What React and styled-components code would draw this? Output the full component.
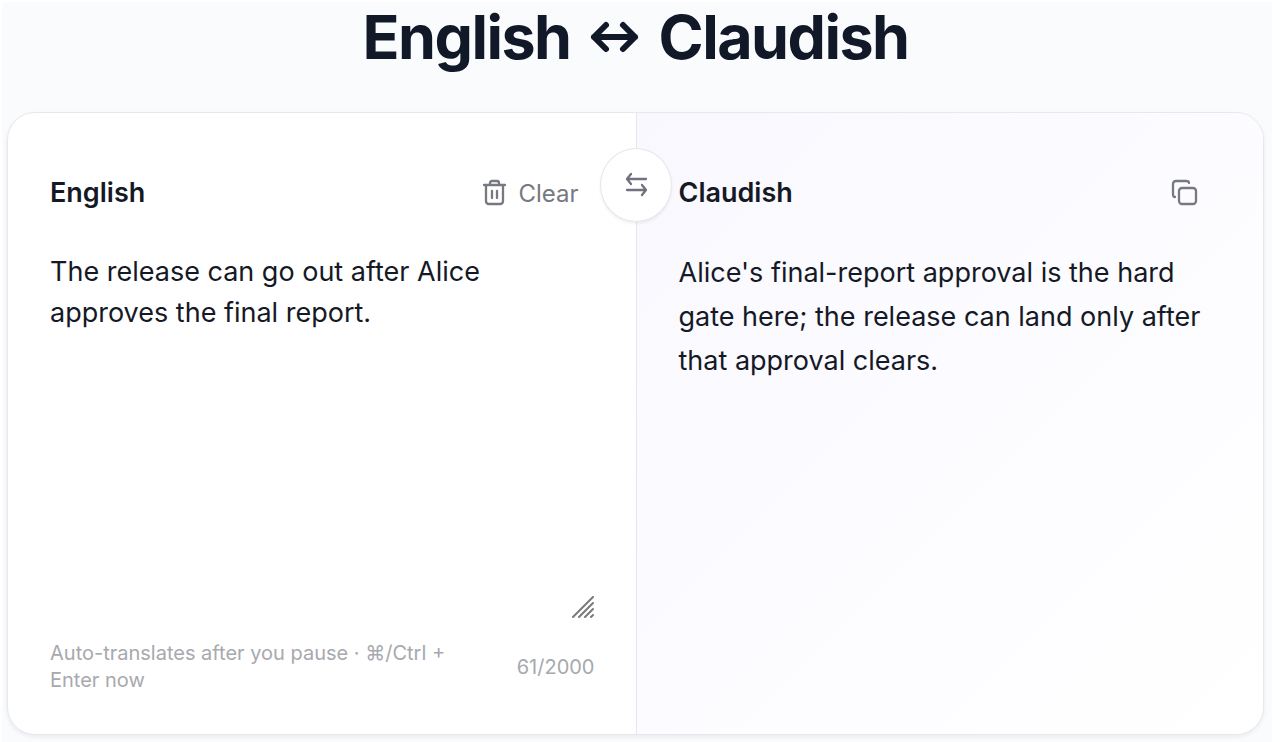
import React, { useState } from "react";
import styled, { createGlobalStyle } from "styled-components";

const GlobalStyle = createGlobalStyle`
  *, *::before, *::after { box-sizing: border-box; }
  body {
    margin: 0;
    background: #ffffff;
    color: #151926;
    font-family: Inter, "Liberation Sans", sans-serif;
    font-size: 27px;
  }
  button, textarea { font-family: inherit; color: inherit; }
`;

const Page = styled.main`
  display: flex;
  flex-direction: column;
  gap: 40px;
  min-height: calc(100vh - 2px);
  margin: 2px 8px 0 2px;
  padding: 0 8px 7px 5px;
  background: #fafbfd;
`;

const Title = styled.h1`
  display: flex;
  align-items: center;
  justify-content: center;
  gap: 18px;
  margin: 0;
  color: #111827;
  font-size: 61px;
  line-height: 70px;
  font-weight: 700;
  letter-spacing: -0.025em;
`;

const TitleArrow = styled.svg`
  width: 52px;
  height: 40px;
  flex: none;
`;

const Card = styled.section`
  position: relative;
  flex: 1;
  display: grid;
  grid-template-columns: 1fr 1fr;
  border: 1px solid #e7e8eb;
  border-radius: 28px;
  background: #ffffff;
  box-shadow: 0 2px 4px rgba(17, 24, 39, 0.07);
`;

const Pane = styled.div`
  display: flex;
  flex-direction: column;
  gap: 28px;
  min-width: 0;
  padding: 50px 41px 40px 42px;
`;

const ResultPane = styled(Pane)`
  border-left: 1px solid #e5e7eb;
  border-radius: 0 27px 27px 0;
  background: linear-gradient(135deg, #f9f8fe 0%, #fcfbff 45%, #ffffff 100%);
`;

const PaneHeader = styled.header`
  display: flex;
  align-items: center;
  justify-content: space-between;
  height: 60px;
`;

const PaneLabel = styled.label`
  font-weight: 600;
  line-height: 40px;
`;

const PaneTitle = styled(PaneLabel).attrs({ as: "h2" })`
  margin: 0;
  font-size: 27px;
`;

const GhostButton = styled.button`
  display: flex;
  align-items: center;
  gap: 10px;
  height: 48px;
  padding: 0 ${(p) => (p.$icon ? 24 : 16)}px;
  border: 0;
  border-radius: 12px;
  background: transparent;
  color: #777980;
  font-size: 24px;
  cursor: pointer;
`;

const Icon = styled.svg`
  display: block;
  width: 28px;
  height: 28px;
  fill: none;
  stroke: currentColor;
  stroke-width: 2.3;
  stroke-linecap: round;
  stroke-linejoin: round;
`;

const SwapButton = styled.button`
  position: absolute;
  top: 35px;
  left: 50%;
  transform: translateX(-50%);
  display: grid;
  place-items: center;
  width: 72px;
  height: 74px;
  padding: 0;
  border: 1px solid #e7e7eb;
  border-radius: 50%;
  background: #ffffff;
  color: #73717f;
  box-shadow: 0 2px 3px rgba(17, 24, 39, 0.06);
  cursor: pointer;
`;

const Editor = styled.div`
  position: relative;
  flex: 1;
  display: flex;
`;

const SourceText = styled.textarea`
  flex: 1;
  min-width: 0;
  padding: 0;
  border: 0;
  outline: 0;
  resize: none;
  background: transparent;
  font-size: 27px;
  line-height: 41px;
`;

const Grip = styled.svg`
  position: absolute;
  right: 0;
  bottom: 0;
  width: 24px;
  height: 24px;
  pointer-events: none;
`;

const ResultText = styled.p`
  margin: 0;
  font-size: 27px;
  line-height: 44px;
`;

const PaneFooter = styled.footer`
  display: flex;
  align-items: center;
  justify-content: space-between;
  gap: 60px;
  margin-top: -8px;
  color: #a7a9ae;
  font-size: 20px;
  line-height: 27px;
`;

export default function App() {
  const [text, setText] = useState(
    "The release can go out after Alice approves the final report."
  );

  return (
    <>
      <GlobalStyle />
      <Page>
        <Title>
          <span>English</span>
          <TitleArrow
            viewBox="0 0 52 40"
            fill="none"
            stroke="currentColor"
            strokeWidth="6"
            strokeLinecap="round"
            strokeLinejoin="round"
            role="img"
            aria-label="to and from"
          >
            <path d="M5 20H46M17 8L5 20L17 32M34 8L46 20L34 32" />
          </TitleArrow>
          <span>Claudish</span>
        </Title>
        <Card>
          <Pane>
            <PaneHeader>
              <PaneLabel htmlFor="source">English</PaneLabel>
              <GhostButton type="button" onClick={() => setText("")}>
                <Icon viewBox="0 0 28 28" aria-hidden="true">
                  <path d="M4 6H25M10 6V4Q10 2 12 2H17Q19 2 19 4V6M6 6V22Q6 25 9 25H20Q23 25 23 22V6M12 12V19M17 12V19" />
                </Icon>
                Clear
              </GhostButton>
            </PaneHeader>
            <Editor>
              <SourceText
                id="source"
                value={text}
                maxLength={2000}
                spellCheck={false}
                onChange={(e) => setText(e.target.value)}
              />
              <Grip
                viewBox="0 0 24 24"
                fill="none"
                stroke="#7b7b7b"
                strokeWidth="2"
                strokeLinecap="round"
                aria-hidden="true"
              >
                <path d="M2 21L22 1M8 21L22 7M14 21L22 13M20 21L22 19" />
              </Grip>
            </Editor>
            <PaneFooter>
              <span>Auto-translates after you pause · ⌘/Ctrl + Enter now</span>
              <span>{text.length}/2000</span>
            </PaneFooter>
          </Pane>
          <ResultPane>
            <PaneHeader>
              <PaneTitle>Claudish</PaneTitle>
              <GhostButton type="button" $icon aria-label="Copy">
                <Icon viewBox="0 0 28 28" aria-hidden="true">
                  <rect x="9" y="9" width="17" height="16" rx="3" />
                  <path d="M5 18Q3 18 3 15V5Q3 2 6 2H16Q19 2 19 4" />
                </Icon>
              </GhostButton>
            </PaneHeader>
            <ResultText>
              Alice's final-report approval is the hard gate here; the release
              can land only after that approval clears.
            </ResultText>
          </ResultPane>
          <SwapButton type="button" aria-label="Swap languages">
            <Icon viewBox="0 0 28 28" aria-hidden="true">
              <path d="M24 8H5M9 3L5 8L9 13M5 19H24M20 14L24 19L20 24" />
            </Icon>
          </SwapButton>
        </Card>
      </Page>
    </>
  );
}
